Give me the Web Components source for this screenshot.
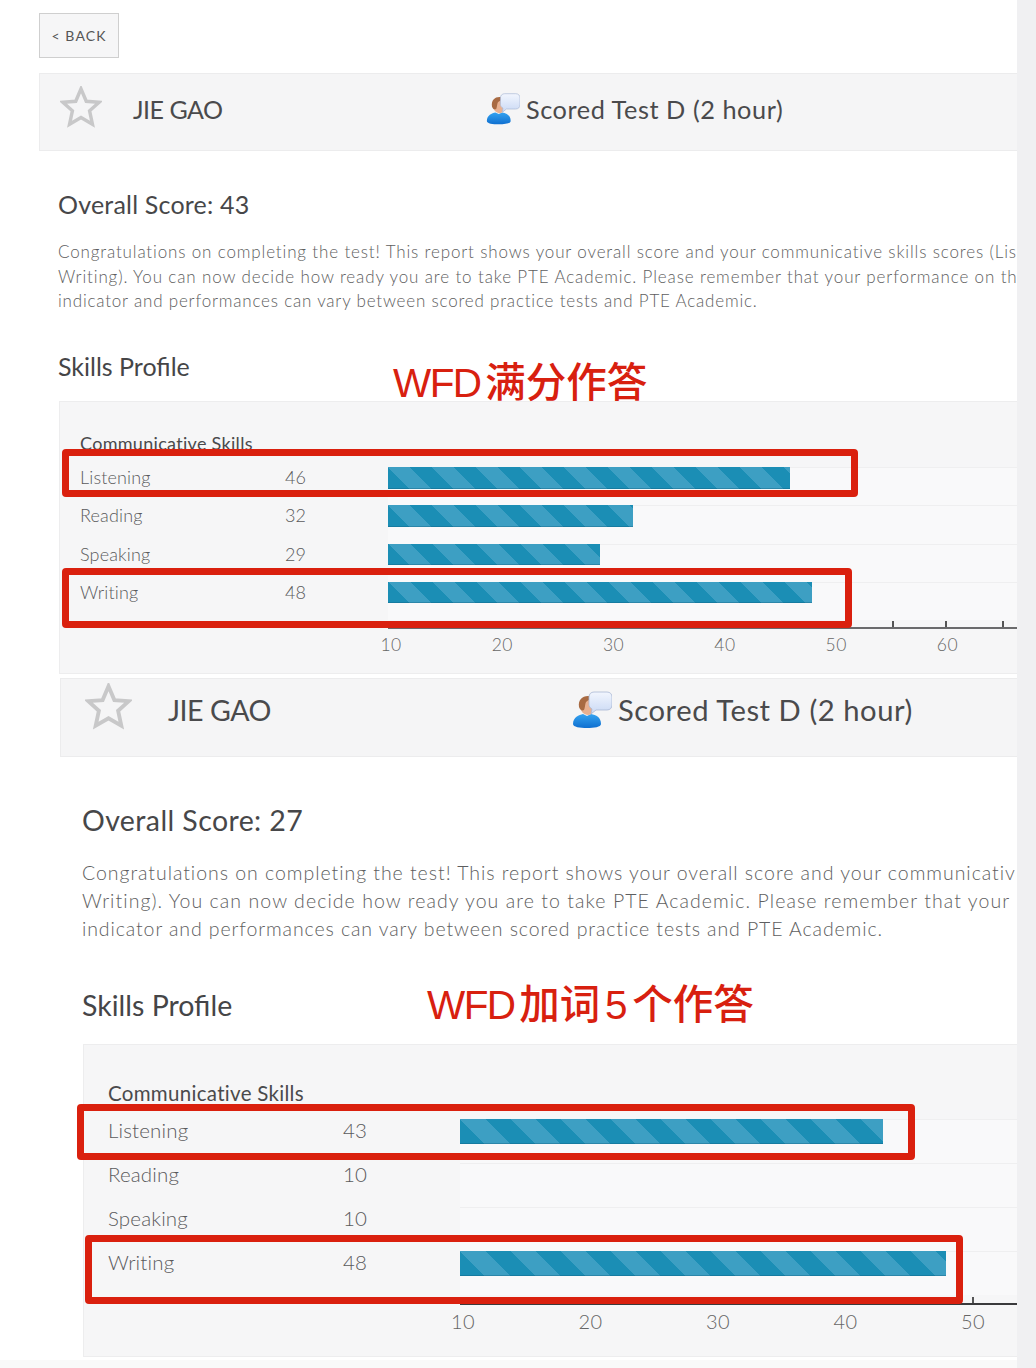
<!DOCTYPE html>
<html lang="en"><head><meta charset="utf-8"><title>Scored Test D</title>
<style>
html,body{margin:0;padding:0;background:#fff}
body{font-family:Lato,"Noto Sans",sans-serif;color:#4c4c4e}
.a{--h:678px;--left:39px;--hh:78px;--hmt:15px;--star:42px;--star-x:20px;--star-gap:31px;--star-mb:11px;--name:25px;--name-mb:6px;--title:25.3px;--title-x:446px;--title-pb:6px;--ic:34px;--ic-gap:6px;
--body-x:19px;--ov:25px;--ov-lh:30px;--ov-mt:38px;--p:17px;--p-lh:24.5px;--p-mt:21px;--p-ls:.8px;--sk:25px;--sk-mt:37.5px;--pan-mt:20px;--pan-h:273px;--pan-x:20px;--pan-pt:31px;--c:18px;--c-lh:20px;--c-mb:14px;
--row:38.3px;--bar:21.5px;--lab:18px;--lab-lh:21.5px;--lab-w:205px;--num-w:103px;--ax-mt:7px;--ax-w:111.3px;--ax-off:-52.6px;--ax-f:17.5px;--ax-c:#6a6a6c;--stripe:31.1px;--ov-ls:.2px;--sk-ls:0px}
.b{--h:690px;--left:60px;--hh:79px;--hmt:0px;--star:47px;--star-x:24px;--star-gap:36px;--star-mb:22px;--name:28.6px;--name-mb:16px;--title:29.2px;--title-x:511px;--title-pb:16px;--ic:40px;--ic-gap:6px;
--body-x:22px;--ov:28.5px;--ov-lh:34px;--ov-mt:46px;--p:19.5px;--p-lh:28px;--p-mt:22px;--p-ls:.9px;--sk:28.5px;--sk-mt:45px;--pan-mt:22px;--pan-h:313px;--pan-x:24px;--pan-pt:37px;--c:20.5px;--c-lh:22px;--c-mb:15px;
--row:44px;--bar:25px;--lab:20.5px;--lab-lh:23px;--lab-w:235px;--num-w:117px;--ax-mt:8px;--ax-w:127.5px;--ax-off:-60.75px;--ax-f:20px;--ax-c:#3a3a3c;--stripe:35.4px;--ov-ls:.4px;--sk-ls:0px}
</style></head>
<body>
<score-sheet>
<report-shot class="a">
  <back-button slot="back">&lt; BACK</back-button>
  <report-header slot="header"><span slot="name">JIE GAO</span><span slot="title">Scored Test D (2 hour)</span></report-header>
  <span slot="overall">Overall Score: 43</span>
  <span slot="l1" style="letter-spacing:.85px">Congratulations on completing the test! This report shows your overall score and your communicative skills scores (Lis</span>
  <span slot="l2" style="letter-spacing:.87px">Writing). You can now decide how ready you are to take PTE Academic. Please remember that your performance on th</span>
  <span slot="l3">indicator and performances can vary between scored practice tests and PTE Academic.</span>
  <span slot="skills">Skills Profile</span>
  <skill-chart slot="chart" labels="10,20,30,40,50,60" ticks="504,557,614">
    <skill-row label="Listening" score="46" bar="402"></skill-row>
    <skill-row label="Reading" score="32" bar="245"></skill-row>
    <skill-row label="Speaking" score="29" bar="212"></skill-row>
    <skill-row label="Writing" score="48" bar="424"></skill-row>
  </skill-chart>
  <red-note slot="notes" style="left:393px;top:358px;font-size:40.5px"><span style="letter-spacing:-1.6px">WFD</span> 满分作答</red-note>
  <red-box slot="notes" style="left:62px;top:449px;width:796px;height:48px"></red-box>
  <red-box slot="notes" style="left:62px;top:568px;width:790px;height:60px"></red-box>
</report-shot>
<report-shot class="b">
  <report-header slot="header"><span slot="name">JIE GAO</span><span slot="title">Scored Test D (2 hour)</span></report-header>
  <span slot="overall">Overall Score: 27</span>
  <span slot="l1" style="letter-spacing:.96px">Congratulations on completing the test! This report shows your overall score and your communicativ</span>
  <span slot="l2" style="letter-spacing:1.07px">Writing). You can now decide how ready you are to take PTE Academic. Please remember that your</span>
  <span slot="l3">indicator and performances can vary between scored practice tests and PTE Academic.</span>
  <span slot="skills">Skills Profile</span>
  <skill-chart slot="chart" labels="10,20,30,40,50" ticks="512">
    <skill-row label="Listening" score="43" bar="423"></skill-row>
    <skill-row label="Reading" score="10" bar="0"></skill-row>
    <skill-row label="Speaking" score="10" bar="0"></skill-row>
    <skill-row label="Writing" score="48" bar="486"></skill-row>
  </skill-chart>
  <red-note slot="notes" style="left:427px;top:302px;font-size:40.5px"><span style="letter-spacing:-1.6px">WFD</span> 加词 5 个作答</red-note>
  <red-box slot="notes" style="left:77px;top:426px;width:838px;height:56px"></red-box>
  <red-box slot="notes" style="left:85px;top:557px;width:878px;height:69px"></red-box>
</report-shot>
</score-sheet>
<script>
function def(name, html, init){
  customElements.define(name, class extends HTMLElement{
    constructor(){super();this.attachShadow({mode:'open'}).innerHTML=html;}
    connectedCallback(){ if(init) init(this, this.shadowRoot); }
  });
}
def('score-sheet',`<style>
:host{display:flex;width:1036px;height:1368px;overflow:hidden;background:#f0f0f2}
.m{width:1017px;flex:none;overflow:hidden;background:#fff}
</style><div class="m"><slot></slot></div>`);

def('report-shot',`<style>
:host{display:block;position:relative;height:var(--h);padding-left:var(--left);box-sizing:border-box;overflow:hidden}
:host(.b){background:linear-gradient(transparent calc(100% - 8px),#f9f9f9 0)}
.body{padding-left:var(--body-x)}
h2{margin:var(--ov-mt) 0 0;font:400 var(--ov)/var(--ov-lh) Lato,sans-serif;letter-spacing:var(--ov-ls);color:#474749}
.p{margin-top:var(--p-mt);font:300 var(--p)/var(--p-lh) Lato,sans-serif;letter-spacing:var(--p-ls);color:#5e5e60;white-space:nowrap}
.p div{height:var(--p-lh)}
h3{margin:var(--sk-mt) 0 0;font:400 var(--sk)/var(--ov-lh) Lato,sans-serif;letter-spacing:var(--sk-ls);color:#454547}
.chart{display:block;margin-top:var(--pan-mt);margin-left:1px}
</style>
<slot name="back"></slot><slot name="header"></slot>
<div class="body">
<h2><slot name="overall"></slot></h2>
<div class="p"><div><slot name="l1"></slot></div><div><slot name="l2"></slot></div><div><slot name="l3"></slot></div></div>
<h3><slot name="skills"></slot></h3>
<div class="chart"><slot name="chart"></slot></div>
</div><slot name="notes"></slot>`);

def('back-button',`<style>
:host{display:flex;align-items:center;justify-content:center;width:80px;height:45px;margin-top:13px;box-sizing:border-box;background:#f6f6f7;border:1px solid #cfcfcf;font:400 14px Lato,sans-serif;letter-spacing:1.1px;color:#555}
</style><slot></slot>`);

const person=`<svg viewBox="0 0 40 36" width="100%" height="100%" aria-hidden="true">
<defs><linearGradient id="bub" x1="0" y1="0" x2="0" y2="1"><stop offset="0" stop-color="#f2f6fe"/><stop offset="1" stop-color="#c9d8f4"/></linearGradient>
<linearGradient id="sh" x1="0" y1="0" x2="0" y2="1"><stop offset="0" stop-color="#35a3f0"/><stop offset="1" stop-color="#0f6fd0"/></linearGradient></defs>
<path d="M1 32c0-7 6-9 10-10l4 2 4-2c5 1 10 3 10 10 0 3-7 4-14 4S1 35 1 32z" fill="url(#sh)"/>
<path d="M8 14c0-6 3-9 8-9 4 0 7 3 7 8s-3 10-7 10c-4 0-8-4-8-9z" fill="#e8b090"/>
<path d="M7 15C6 8 10 4 16 4c3 0 5 1 6 3-4 0-6 1-8 3-1 2-1 6-2 8-2 1-4 0-5-3z" fill="#a86a42"/>
<path d="M17 5c0-3 2-5 5-5h13c3 0 5 2 5 5v8c0 3-2 5-5 5H24l-5 4 1-5c-2-1-3-3-3-4z" fill="url(#bub)" stroke="#aab8d4" stroke-width=".8"/>
</svg>`;
def('report-header',`<style>
:host{display:flex;align-items:center;position:relative;height:var(--hh);margin-top:var(--hmt);box-sizing:border-box;background:#f5f5f6;border:1px solid #ececed;border-right:0;color:#4a4a4c}
.star{flex:none;width:var(--star);height:var(--star);margin-left:var(--star-x);margin-right:var(--star-gap);margin-bottom:var(--star-mb)}
.star svg{display:block;width:100%;height:100%}
.name{font:400 var(--name) Lato,sans-serif;flex:none;letter-spacing:-.5px;margin-bottom:var(--name-mb)}
.title{position:absolute;left:var(--title-x);top:0;bottom:0;box-sizing:border-box;padding-bottom:var(--title-pb);display:flex;align-items:center;gap:var(--ic-gap);font:400 var(--title) Lato,sans-serif;letter-spacing:.55px;white-space:nowrap}
.ic{width:var(--ic);height:var(--ic);flex:none;display:block}
</style>
<div class="star"><svg viewBox="0 0 44 44"><polygon points="22,3 27.5,16 41,17 31,26 34,40 22,33 10,40 13,26 3,17 16.5,16" fill="none" stroke="#c8c8c9" stroke-width="3.6" stroke-linejoin="miter"/></svg></div>
<div class="name"><slot name="name"></slot></div>
<div class="title"><div class="ic">${person}</div><span><slot name="title"></slot></span></div>`);

def('skill-chart',`<style>
:host{display:block;position:relative;height:var(--pan-h);box-sizing:border-box;background:#f6f6f7;border:1px solid #ededee;border-right:0;padding:var(--pan-pt) 0 0 var(--pan-x)}
.c{font:400 var(--c)/var(--c-lh) Lato,sans-serif;color:#4a4a4c;letter-spacing:.3px;margin-bottom:var(--c-mb)}
.axis{position:relative;margin-top:var(--ax-mt);margin-left:calc(var(--lab-w) + var(--num-w));border-top:2px solid var(--ax-c);height:0}
.ticks i{position:absolute;bottom:0;width:1.5px;height:6px;background:#555}
.labels{display:flex;margin-left:calc(var(--lab-w) + var(--num-w) + var(--ax-off));margin-top:4px}
.labels span{flex:none;width:var(--ax-w);text-align:center;font:300 var(--ax-f)/24px Lato,sans-serif;color:#666;letter-spacing:.5px}
</style><div class="c">Communicative Skills</div><slot></slot>
<div class="axis"><div class="ticks" id="t"></div></div><div class="labels" id="l"></div>`,(el,r)=>{
  r.getElementById('l').innerHTML=(el.getAttribute('labels')||'').split(',').map(s=>`<span>${s}</span>`).join('');
  r.getElementById('t').innerHTML=(el.getAttribute('ticks')||'').split(',').map(s=>`<i style="left:${s}px;top:-8px"></i>`).join('');
});

def('skill-row',`<style>
:host{display:grid;grid-template-columns:var(--lab-w) var(--num-w) 1fr;height:var(--row);font:300 var(--lab)/var(--lab-lh) Lato,sans-serif;color:#5a5a5c;letter-spacing:.15px}
.track{background:#f9f9fa;border-top:1px solid #efeff0;height:calc(var(--row) - 1px)}
.bar{--a:calc(var(--bar)*.7071);height:var(--bar);margin-top:-1px;box-shadow:inset 0 -1px rgba(15,90,120,.35);
background:repeating-linear-gradient(45deg,#1b8eb5 calc(var(--a) - var(--stripe)/2),#1b8eb5 var(--a),#3d9fc3 var(--a),#3d9fc3 calc(var(--a) + var(--stripe)/2))}
</style><div id="a"></div><div id="b"></div><div class="track"><div class="bar" id="c"></div></div>`,(el,r)=>{
  r.getElementById('a').textContent=el.getAttribute('label');
  r.getElementById('b').textContent=el.getAttribute('score');
  const w=+el.getAttribute('bar');const c=r.getElementById('c');
  c.style.width=w+'px'; if(!w)c.style.display='none';
});

def('red-note',`<style>
:host{position:absolute;font-family:"Liberation Sans","Noto Sans CJK SC",sans-serif;font-weight:500;word-spacing:-6.5px;color:#d8200f;line-height:50px;white-space:nowrap}
</style><slot></slot>`);
def('red-box',`<style>
:host{position:absolute;box-sizing:border-box;border:7.5px solid #da200e;border-radius:4px}
</style>`);
</script>
</body></html>
